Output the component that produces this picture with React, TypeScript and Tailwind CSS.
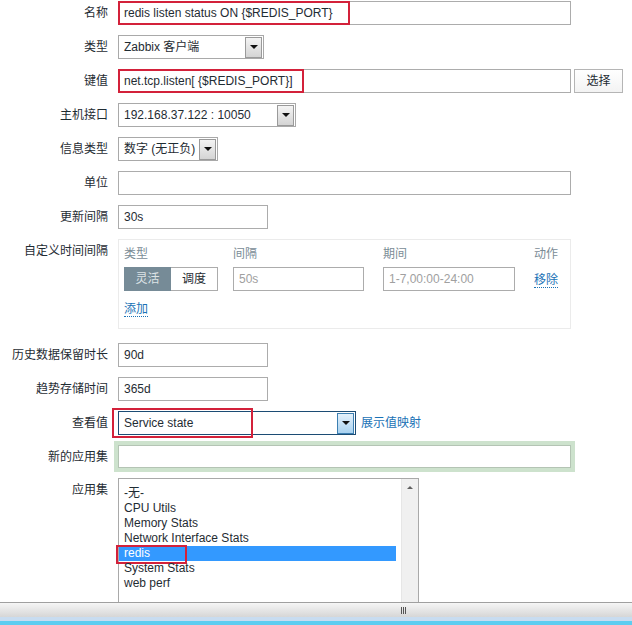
import React from "react";

// Zabbix item edit form (partial)

const labelCls = "w-[108px] shrink-0 text-right text-[12px] leading-[14px] text-[#1f2c33]";

function Row({ label, children, alignTop = false }: { label: string; children: React.ReactNode; alignTop?: boolean }) {
  return (
    <div className={`flex gap-[10px] ${alignTop ? "items-start" : "items-center"}`}>
      <div className={`${labelCls} ${alignTop ? "pt-[5px]" : ""}`}>{label}</div>
      <div className="flex items-center">{children}</div>
    </div>
  );
}

function TextBox({ value = "", width, muted = false }: { value?: string; width: string; muted?: boolean }) {
  return (
    <div className={`${width} h-[24px] border border-[#acacac] bg-white px-[5px] flex items-center text-[12px] whitespace-nowrap overflow-hidden ${muted ? "text-[#a0a0a0]" : "text-[#1f2c33]"}`}>
      {value}
    </div>
  );
}

function Arrow({ focused = false }: { focused?: boolean }) {
  return (
    <div
      className={`w-[17px] h-[21px] mr-px flex items-center justify-center border ${
        focused
          ? "border-[#3c7fb1] bg-linear-to-b from-[#e4f1fb] to-[#a9d2f0]"
          : "border-[#9a9a9a] bg-linear-to-b from-[#f4f4f4] to-[#d4d4d4]"
      }`}
    >
      <div className="w-0 h-0 border-l-[4px] border-r-[4px] border-t-[4px] border-l-transparent border-r-transparent border-t-[#111]" />
    </div>
  );
}

function Select({ value, width, focused = false }: { value: string; width: string; focused?: boolean }) {
  return (
    <div className={`${width} h-[24px] border ${focused ? "border-[#1c4c74]" : "border-[#a9a9a9]"} bg-white flex items-center justify-between text-[12px] text-[#1f2c33]`}>
      <span className="pl-[5px] whitespace-nowrap">{value}</span>
      <Arrow focused={focused} />
    </div>
  );
}

function Link({ children }: { children: React.ReactNode }) {
  return <span className="text-[12px] leading-[14px] text-[#1a72b6] border-b border-dotted border-[#1a72b6]">{children}</span>;
}

const apps = ["-无-", "CPU Utils", "Memory Stats", "Network Interface Stats", "redis", "System Stats", "web perf"];

export default function App() {
  return (
    <div className="w-[632px] h-[625px] bg-white flex flex-col overflow-hidden font-['Liberation_Sans','Noto_Sans_CJK_SC',sans-serif]">
      <div className="flex-1 overflow-hidden pt-px flex flex-col gap-[10px]">
        <Row label="名称">
          <div className="relative">
            <TextBox width="w-[453px]" value="redis listen status ON {$REDIS_PORT}" />
            <div className="absolute left-0 top-0 w-[232px] h-[24px] border-2 border-[#d3213a]" />
          </div>
        </Row>

        <Row label="类型">
          <Select width="w-[146px]" value="Zabbix 客户端" />
        </Row>

        <Row label="键值">
          <div className="relative">
            <TextBox width="w-[453px]" value="net.tcp.listen[ {$REDIS_PORT}]" />
            <div className="absolute left-0 top-0 w-[186px] h-[24px] border-2 border-[#d3213a]" />
          </div>
          <div className="ml-[3px] w-[49px] h-[24px] border border-[#b5b5b5] bg-linear-to-b from-white to-[#f3f3f3] flex items-center justify-center text-[12px] text-[#1f2c33]">
            选择
          </div>
        </Row>

        <Row label="主机接口">
          <Select width="w-[178px]" value="192.168.37.122 : 10050" />
        </Row>

        <Row label="信息类型">
          <Select width="w-[100px]" value="数字 (无正负)" />
        </Row>

        <Row label="单位">
          <TextBox width="w-[453px]" />
        </Row>

        <Row label="更新间隔">
          <TextBox width="w-[150px]" value="30s" />
        </Row>

        <Row label="自定义时间间隔" alignTop>
          <div className="w-[453px] h-[90px] border border-[#ebebeb] pl-[5px] pt-[7px]">
            <div className="flex text-[12px] leading-[14px] text-[#7a8c96]">
              <div className="w-[94px]">类型</div>
              <div className="w-[131px] ml-[15px]">间隔</div>
              <div className="w-[132px] ml-[19px]">期间</div>
              <div className="ml-[19px]">动作</div>
            </div>
            <div className="flex items-center mt-[6px]">
              <div className="w-[94px] h-[24px] flex text-[12px]">
                <div className="w-[47px] bg-[#768b97] text-[#dde3e6] flex items-center justify-center">灵活</div>
                <div className="w-[47px] border border-l-0 border-[#acacac] text-[#1f2c33] flex items-center justify-center">调度</div>
              </div>
              <div className="ml-[15px]">
                <TextBox width="w-[131px]" value="50s" muted />
              </div>
              <div className="ml-[19px]">
                <TextBox width="w-[132px]" value="1-7,00:00-24:00" muted />
              </div>
              <div className="ml-[19px]">
                <Link>移除</Link>
              </div>
            </div>
            <div className="mt-[5px]">
              <Link>添加</Link>
            </div>
          </div>
        </Row>

        <div className="mt-[4px]">
          <Row label="历史数据保留时长">
            <TextBox width="w-[150px]" value="90d" />
          </Row>
        </div>

        <Row label="趋势存储时间">
          <TextBox width="w-[150px]" value="365d" />
        </Row>

        <Row label="查看值">
          <div className="relative">
            <Select width="w-[238px]" value="Service state" focused />
            <div className="absolute -left-[6px] -top-[3px] w-[141px] h-[30px] border-2 border-[#d3213a]" />
          </div>
          <span className="ml-[5px] text-[12px] text-[#1a72b6]">展示值映射</span>
        </Row>

        <Row label="新的应用集">
          <div className="w-[453px] h-[23px] border border-[#b4c4b4] bg-white shadow-[0_0_0_4px_#cde2cd]" />
        </Row>

        <Row label="应用集" alignTop>
          <div className="w-[301px] h-[130px] border border-[#a9a9a9] bg-white flex">
            <div className="w-[277px] pt-[7px]">
              {apps.map((a) => (
                <div
                  key={a}
                  className={`relative h-[15px] leading-[15px] pl-[5px] text-[12px] whitespace-nowrap ${
                    a === "redis" ? "bg-[#3399ff] text-white" : "text-[#1f2c33]"
                  }`}
                >
                  {a}
                  {a === "redis" && <div className="absolute -left-[3px] -top-[1px] w-[71px] h-[19px] border-2 border-[#d3213a]" />}
                </div>
              ))}
            </div>
            <div className="ml-auto w-[17px] h-full bg-[#f0f0f0] border-l border-[#e6e6e6] flex justify-center pt-[7px]">
              <div className="w-0 h-0 border-l-[3px] border-r-[3px] border-b-[3px] border-l-transparent border-r-transparent border-b-[#606060]" />
            </div>
          </div>
        </Row>
      </div>

      <div className="h-[15px] shrink-0 border-t border-[#a0a0a0] bg-linear-to-b from-[#f6f6f6] via-[#e6e6e6] to-[#d6d6d6] flex items-center justify-center">
        <div className="flex gap-[1px] ml-[174px]">
          <div className="w-px h-[7px] bg-[#555]" />
          <div className="w-px h-[7px] bg-[#555]" />
          <div className="w-px h-[7px] bg-[#555]" />
        </div>
      </div>
      <div className="h-[4px] shrink-0 bg-[#c8dcf0]" />
      <div className="h-[4px] shrink-0 bg-[#5ccdf0]" />
    </div>
  );
}
